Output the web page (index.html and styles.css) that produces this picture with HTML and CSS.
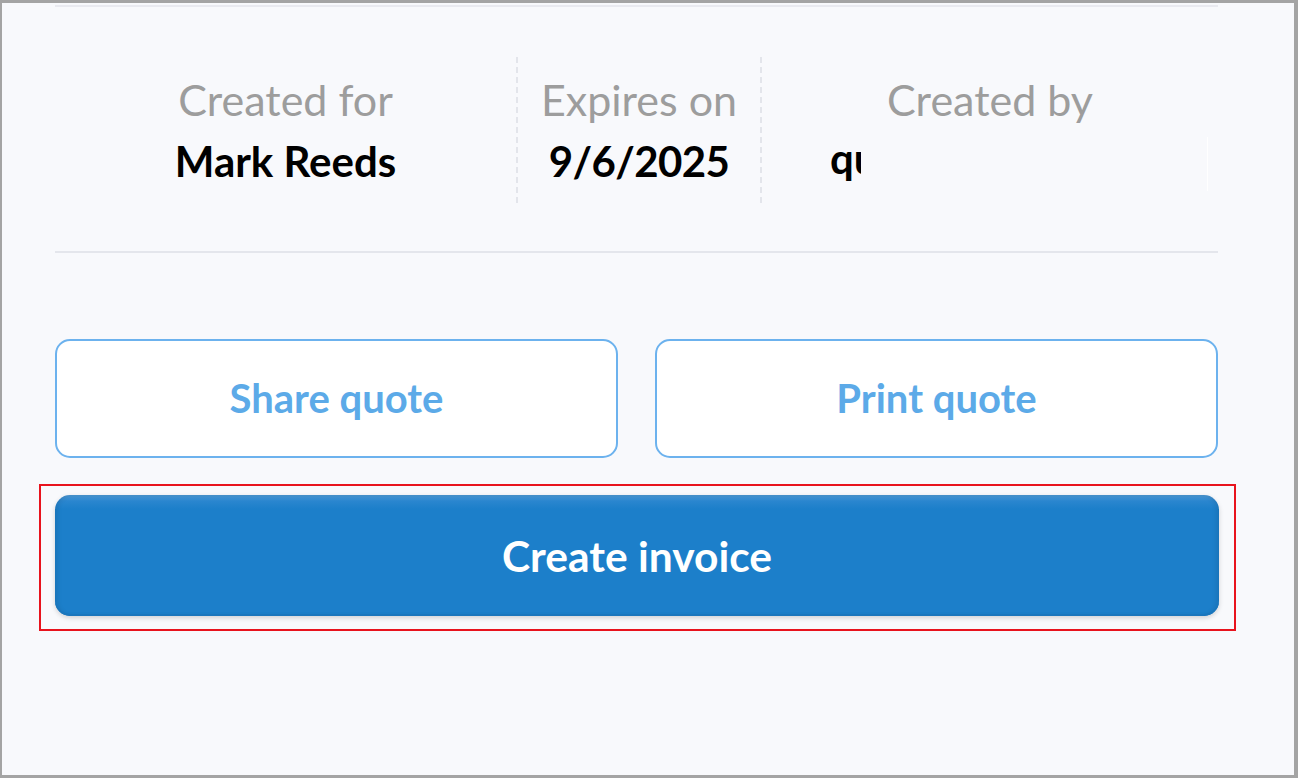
FILE: index.html
```html
<!DOCTYPE html>
<html>
<head>
<meta charset="utf-8">
<link rel="stylesheet" href="styles.css">
</head>
<body>
<div class="frame">
  <div class="content">
    <div class="top-line"></div>
    <div class="info">
      <div class="col col-for">
        <div class="label">Created for</div>
        <div class="value">Mark Reeds</div>
      </div>
      <div class="col col-exp">
        <div class="label">Expires on</div>
        <div class="value date">9/6/2025</div>
      </div>
      <div class="col col-by">
        <div class="label">Created by</div>
        <div class="value-box"><span class="value clip">quoteadmin</span><span class="blank"></span></div>
      </div>
    </div>
    <div class="divider"></div>
    <div class="actions">
      <button class="btn-outline">Share quote</button>
      <button class="btn-outline">Print quote</button>
    </div>
    <div class="highlight">
      <button class="btn-primary">Create invoice</button>
    </div>
  </div>
</div>
</body>
</html>
```
FILE: styles.css
```css
* { box-sizing: border-box; }
html, body { margin: 0; padding: 0; }
body {
  width: 1298px;
  height: 778px;
  background: #f8f9fc;
  font-family: Lato, "Open Sans", sans-serif;
  overflow: hidden;
}
.frame {
  width: 1298px;
  height: 778px;
  border: 3px solid #a4a4a4;
  border-left-width: 2px;
  border-right-width: 4px;
  background: #f8f9fc;
}
.content {
  width: 1163px;
  margin-left: 53px;
  padding-top: 2px;
}
.top-line {
  height: 2px;
  background: #e9eaf0;
}
.info {
  display: grid;
  grid-template-columns: 461px 244px 1fr;
  padding-top: 50px;
  height: 244px;
}
.col {
  height: 146px;
  display: flex;
  flex-direction: column;
  align-items: center;
  padding-top: 19px;
}
.col-exp, .col-by {
  border-left: 2px dashed #e3e5eb;
}
.label {
  font-size: 43px;
  color: #9d9d9d;
  line-height: 48px;
}
.value {
  font-size: 42px;
  font-weight: 700;
  color: #000;
  line-height: 48px;
  margin-top: 13px;
}
.value.date { letter-spacing: -0.6px; }
.col-by { align-items: stretch; }
.col-by .label { text-align: center; }
.value-box {
  display: flex;
  margin-top: 13px;
  margin-left: 68px;
  margin-right: 10px;
  height: 54px;
  align-items: flex-start;
}
.value.clip {
  margin-top: -3px;
  width: 31px;
  overflow: hidden;
  white-space: nowrap;
  display: block;
}
.blank {
  flex: 1;
  height: 54px;
  border-right: 1px solid #ffffff;
}
.divider {
  height: 2px;
  background: #e4e6ec;
}
.actions {
  display: grid;
  grid-template-columns: 1fr 1fr;
  column-gap: 37px;
  margin-top: 86px;
}
button {
  font-family: Lato, "Open Sans", sans-serif;
  cursor: pointer;
}
.btn-outline {
  height: 119px;
  background: #ffffff;
  border: 2px solid #6cb2ee;
  border-radius: 15px;
  color: #5caae8;
  font-size: 40px;
  font-weight: 700;
  padding-bottom: 2px;
}
.highlight {
  margin-top: 26px;
  margin-left: -16px;
  width: 1197px;
  border: 2px solid #e8131d;
  padding: 9px 17px 13px 14px;
}
.btn-primary {
  display: block;
  width: 1164px;
  height: 121px;
  border: none;
  border-radius: 15px;
  background: linear-gradient(to bottom, #4d9ad8 0px, #2a86cf 6px, #1c7fca 14px, #1c7fca 100%);
  box-shadow: inset 0 -2px 0 #1a76bd, inset 3px 0 4px rgba(0,0,0,0.08), inset -3px 0 4px rgba(0,0,0,0.08), 0 2px 5px rgba(0,0,0,0.16);
  color: #ffffff;
  font-size: 42.5px;
  font-weight: 700;
  padding-bottom: 2px;
}
```
